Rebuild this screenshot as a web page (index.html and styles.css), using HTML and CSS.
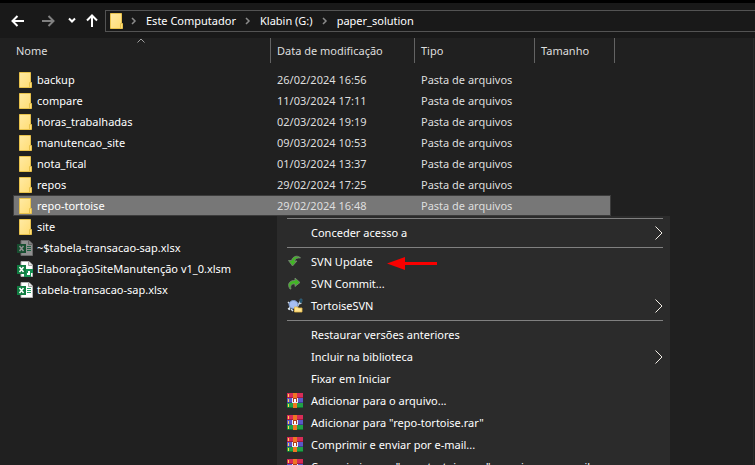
FILE: index.html
```html
<!DOCTYPE html>
<html lang="pt-BR">
<head>
<meta charset="utf-8">
<meta name="viewport" content="width=device-width, initial-scale=1">
<title>paper_solution</title>
<link rel="stylesheet" href="styles.css">
</head>
<body>
<svg class="defs" aria-hidden="true">
  <defs>
    <linearGradient id="fold" x1="0" y1="0" x2="1" y2="1"><stop offset="0" stop-color="#ffeaa4"/><stop offset="1" stop-color="#ffdc72"/></linearGradient>
    <symbol id="folder" viewBox="0 0 16 16">
      <path d="M1.5.5h11v10h1v5h-12z" fill="url(#fold)" stroke="#e8c24c"/>
      <path d="M11.5 15v-4.500h1" fill="none" stroke="#e8c24c"/>
    </symbol>
    <symbol id="sheet" viewBox="0 0 16 16">
      <path d="M4 .5h8L15.500 4v11.500H4z" fill="#fff" stroke="#b5b5b5"/>
      <path d="M11.500.5V4.500h4" fill="#e4e4e4" stroke="#a5a5a5"/>
      <path d="M10 6.500H14M10 8.500H14M10 10.500H14" stroke="#21a366"/>
      <path d="M0 4h9v9H0z" fill="#107c41"/>
      <path d="M2.500 6l4 5M6.500 6l-4 5" stroke="#fff" stroke-width="1.500"/>
    </symbol>
    <symbol id="macro" viewBox="0 0 16 16">
      <path d="M4 .5h8L15.500 4v11.500H4z" fill="#fff" stroke="#b5b5b5"/>
      <path d="M11.500.5V4.500h4" fill="#e4e4e4" stroke="#a5a5a5"/>
      <path d="M9 8h7v4h-2v4H7v-3h2z" fill="#169154"/>
      <path d="M11 10h2v4h-3v-2h1z" fill="#fff"/>
      <path d="M0 4h9v9H0z" fill="#107c41"/>
      <path d="M2.500 6l4 5M6.500 6l-4 5" stroke="#fff" stroke-width="1.500"/>
    </symbol>
    <symbol id="update" viewBox="0 0 16 16">
      <path d="M13.500 4C12 1.500 6 1 4.500 6.500L1.500 6.500 5.500 12 10 7H7.500C8 4.500 10.500 3.500 13.500 4z" fill="#42b526" stroke="#7a8577" stroke-width=".8"/>
    </symbol>
    <symbol id="commit" viewBox="0 0 16 16">
      <path d="M3 13C-.5 8 3 4 8 4.500V2l5 4.500-5 4V8C4.500 7.500 3 9.500 4 13z" fill="#42b526" stroke="#7a8577" stroke-width=".8"/>
    </symbol>
    <symbol id="tortoise" viewBox="0 0 16 16">
      <path d="M1 4l3 3-2 5M10 9l3-5 1 2M3 10l-2 1M4 11l2 2" fill="none" stroke="#d7e0e8" stroke-width="1.500"/>
      <ellipse cx="6.500" cy="6.500" rx="4.500" ry="4" fill="#a7bff3" stroke="#7894c6"/>
      <path d="M13 1h2v3l-2 1z" fill="#17435b" stroke="#3c7290" stroke-width=".6"/>
      <path d="M7.500 9h3l1 1H15v4H7.500z" fill="#ffe38d" stroke="#e5b94a" stroke-width=".8"/>
    </symbol>
    <symbol id="rar" viewBox="0 0 16 16">
      <path d="M0 0h16v5H0z" fill="#d92c57"/><path d="M0 4h16v1H0z" fill="#a81a42"/>
      <path d="M0 5h16v5H0z" fill="#5b58c8"/><path d="M0 9h16v1H0z" fill="#403d98"/>
      <path d="M0 10h16v5H0z" fill="#20a047"/><path d="M0 14h16v1H0z" fill="#107330"/>
      <path d="M1 1h1v3H1zM1 6h1v3H1zM1 11h1v3H1z" fill="#ffd34d"/>
      <path d="M6 0h4v15H6z" fill="#ef7622"/>
      <path d="M6 5h4v5H6z" fill="#ad3e20"/>
      <path d="M5 5h1v4h4V5h1v5H5z" fill="#e8e8f4"/>
      <path d="M7 6h2v3H7z" fill="#fff"/>
    </symbol>
    <symbol id="next" viewBox="0 0 8 14"><path d="M.5.5L7 7 .5 13.500" fill="none" stroke="#f2eee6"/></symbol>
    <symbol id="crumb" viewBox="0 0 6 8"><path d="M1 1l3 3-3 3" fill="none" stroke="#8b8b8b" stroke-width="1.500"/></symbol>
  </defs>
</svg>

<header class="toolbar">
  <nav class="history" aria-label="Navegação">
    <button aria-label="Voltar"><svg width="14" height="14" viewBox="0 0 14 14"><path d="M13 7H2M6.500 2L1.500 7l5 5" fill="none" stroke="#fff" stroke-width="2"/></svg></button>
    <button aria-label="Avançar"><svg width="14" height="14" viewBox="0 0 14 14"><path d="M1 7h11M7.500 2l5 5-5 5" fill="none" stroke="#808080" stroke-width="2"/></svg></button>
    <button class="recent" aria-label="Locais recentes"><svg width="8" height="14" viewBox="0 0 8 14"><path d="M1 4.500l3 3 3-3" fill="none" stroke="#fff" stroke-width="2"/></svg></button>
    <button aria-label="Acima"><svg width="14" height="14" viewBox="0 0 14 14"><path d="M7 13V2M2 6.500l5-5 5 5" fill="none" stroke="#fff" stroke-width="2"/></svg></button>
  </nav>
  <div class="address">
    <svg class="icon"><use href="#folder"/></svg>
    <svg class="crumb"><use href="#crumb"/></svg>
    <button>Este Computador</button>
    <svg class="crumb"><use href="#crumb"/></svg>
    <button>Klabin (G:)</button>
    <svg class="crumb"><use href="#crumb"/></svg>
    <button>paper_solution</button>
  </div>
</header>

<main class="pane">
  <table class="files">
    <colgroup><col class="c-name"><col class="c-date"><col class="c-type"><col class="c-size"></colgroup>
    <thead>
      <tr>
        <th class="sorted">Nome<svg class="sort" viewBox="0 0 8 5"><path d="M.5 4.500L4 1l3.500 3.500" fill="none" stroke="#a0a0a0"/></svg></th>
        <th>Data de modificação</th><th>Tipo</th><th>Tamanho</th>
      </tr>
    </thead>
    <tbody>
      <tr><td><span class="name"><svg class="icon"><use href="#folder"/></svg>backup</span></td><td>26/02/2024 16:56</td><td>Pasta de arquivos</td><td></td></tr>
      <tr><td><span class="name"><svg class="icon"><use href="#folder"/></svg>compare</span></td><td>11/03/2024 17:11</td><td>Pasta de arquivos</td><td></td></tr>
      <tr><td><span class="name"><svg class="icon"><use href="#folder"/></svg>horas_trabalhadas</span></td><td>02/03/2024 19:19</td><td>Pasta de arquivos</td><td></td></tr>
      <tr><td><span class="name"><svg class="icon"><use href="#folder"/></svg>manutencao_site</span></td><td>09/03/2024 10:53</td><td>Pasta de arquivos</td><td></td></tr>
      <tr><td><span class="name"><svg class="icon"><use href="#folder"/></svg>nota_fical</span></td><td>01/03/2024 13:37</td><td>Pasta de arquivos</td><td></td></tr>
      <tr><td><span class="name"><svg class="icon"><use href="#folder"/></svg>repos</span></td><td>29/02/2024 17:25</td><td>Pasta de arquivos</td><td></td></tr>
      <tr class="selected"><td><span class="name"><svg class="icon"><use href="#folder"/></svg>repo-tortoise</span></td><td>29/02/2024 16:48</td><td>Pasta de arquivos</td><td></td></tr>
      <tr><td><span class="name"><svg class="icon"><use href="#folder"/></svg>site</span></td><td></td><td></td><td></td></tr>
      <tr><td><span class="name"><svg class="icon doc hidden-file"><use href="#sheet"/></svg>~$tabela-transacao-sap.xlsx</span></td><td></td><td></td><td></td></tr>
      <tr><td><span class="name"><svg class="icon doc"><use href="#macro"/></svg>ElaboraçãoSiteManutenção v1_0.xlsm</span></td><td></td><td></td><td></td></tr>
      <tr><td><span class="name"><svg class="icon doc"><use href="#sheet"/></svg>tabela-transacao-sap.xlsx</span></td><td></td><td></td><td></td></tr>
    </tbody>
  </table>
</main>

<div class="menu">
  <hr>
  <button><span class="slot"></span>Conceder acesso a<svg class="next"><use href="#next"/></svg></button>
  <hr>
  <button><svg class="slot"><use href="#update"/></svg>SVN Update<svg class="pointer" viewBox="0 0 50 13"><path d="M0 6.500L18 0v5h32v3H18v5z" fill="#f90000"/></svg></button>
  <button><svg class="slot"><use href="#commit"/></svg>SVN Commit...</button>
  <button><svg class="slot"><use href="#tortoise"/></svg>TortoiseSVN<svg class="next"><use href="#next"/></svg></button>
  <hr>
  <button><span class="slot"></span>Restaurar versões anteriores</button>
  <button><span class="slot"></span>Incluir na biblioteca<svg class="next"><use href="#next"/></svg></button>
  <button><span class="slot"></span>Fixar em Iniciar</button>
  <button><svg class="slot"><use href="#rar"/></svg>Adicionar para o arquivo...</button>
  <button><svg class="slot"><use href="#rar"/></svg>Adicionar para "repo-tortoise.rar"</button>
  <button><svg class="slot"><use href="#rar"/></svg>Comprimir e enviar por e-mail...</button>
  <button><svg class="slot"><use href="#rar"/></svg>Comprimir para "repo-tortoise.rar" e enviar por e-mail</button>
</div>
</body>
</html>
```
FILE: styles.css
```css
* { box-sizing: border-box; }

body {
  margin: 0;
  min-height: 100vh;
  position: relative;
  display: flex;
  flex-direction: column;
  overflow: hidden;
  border-top: 3px solid #000;
  background: #202020;
  color: #fff;
  font: 11px/16px "Noto Sans", "Open Sans", sans-serif;
}

button {
  margin: 0;
  padding: 0;
  border: 0;
  background: none;
  color: inherit;
  font: inherit;
  white-space: nowrap;
}

svg { display: block; flex: none; }
.defs { position: absolute; width: 0; height: 0; }
.icon { width: 16px; height: 16px; }

.toolbar {
  display: flex;
  align-items: center;
  height: 35px;
  padding-left: 11px;
  background: #191919;
}

.history { display: flex; gap: 16px; width: 94px; }
.history .recent { margin: 0 -7px 0 -3px; }

.address {
  flex: 1;
  display: flex;
  align-items: center;
  height: 22px;
  padding-left: 3px;
  border: 1px solid #535353;
  border-right: 0;
}

.crumb { width: 6px; height: 8px; margin: 0 9px; }
.address .icon + .crumb { margin-left: 6px; }

.pane {
  flex: 1;
  margin-right: 1px;
  padding-left: 13px;
  border-right: 1px solid #2b2b2b;
}

.files {
  width: 602px;
  table-layout: fixed;
  border-collapse: separate;
  border-spacing: 0;
}
.c-name { width: 258px; }
.c-date { width: 144px; }
.c-type { width: 120px; }
.c-size { width: 80px; }

th {
  height: 25px;
  padding: 0 6px;
  border-right: 1px solid #636363;
  color: #dedede;
  font-weight: 400;
  text-align: left;
}
th:first-child { padding-left: 3px; }
.sorted { position: relative; }
.sort { position: absolute; top: 0; left: calc(50% - 5px); width: 8px; height: 5px; }

tbody::before { content: ""; display: table-row; height: 6px; }

td {
  height: 21px;
  padding: 0 6px;
  color: #dedede;
  white-space: nowrap;
}
td:first-child { padding-left: 5px; color: #fff; }
.name { display: flex; align-items: center; gap: 3px; }
.doc { margin: 0 1px 0 -1px; }
.hidden-file { opacity: .5; }

.selected td {
  background: #777;
  border: solid #3c3c3c;
  border-width: 1px 0;
}
.selected td:first-child { border-left-width: 1px; padding-left: 4px; }
.selected td:last-child {
  border: 0;
  background:
    linear-gradient(#777, #777) 0 1px / calc(100% - 5px) calc(100% - 2px) no-repeat,
    linear-gradient(#3c3c3c, #3c3c3c) 0 0 / calc(100% - 4px) 100% no-repeat;
}

.menu {
  position: absolute;
  top: 213px;
  bottom: 0;
  left: 277px;
  width: 393px;
  overflow: hidden;
  background: #2b2b2b;
}
.menu hr {
  height: 1px;
  margin: 3px 7px 3px 10px;
  border: 0;
  background: #808080;
}
.menu hr:first-child { margin-top: 2px; }
.menu button {
  display: flex;
  align-items: center;
  width: 100%;
  height: 22px;
  padding: 0 7px 0 10px;
}
.slot { flex: none; width: 16px; height: 16px; margin-right: 8px; }
.next { width: 8px; height: 14px; margin-left: auto; }
.pointer { width: 50px; height: 13px; margin: 3px 0 0 14px; }
```
